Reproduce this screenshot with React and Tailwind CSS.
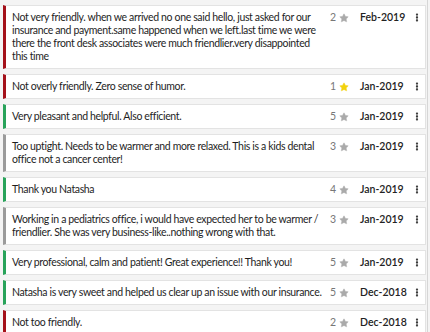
import { Star, EllipsisVertical } from 'lucide-react';

const reviews = [
  { text: 'Not very friendly. when we arrived no one said hello, just asked for our insurance and payment.same happened when we left.last time we were there the front desk associates were much friendlier.very disappointed this time', rating: 2, date: 'Feb-2019', tone: 'bad' },
  { text: 'Not overly friendly. Zero sense of humor.', rating: 1, date: 'Jan-2019', tone: 'bad' },
  { text: 'Very pleasant and helpful. Also efficient.', rating: 5, date: 'Jan-2019', tone: 'good' },
  { text: 'Too uptight. Needs to be warmer and more relaxed. This is a kids dental office not a cancer center!', rating: 3, date: 'Jan-2019', tone: 'meh' },
  { text: 'Thank you Natasha', rating: 4, date: 'Jan-2019', tone: 'good' },
  { text: 'Working in a pediatrics office, i would have expected her to be warmer / friendlier. She was very business-like..nothing wrong with that.', rating: 3, date: 'Jan-2019', tone: 'meh' },
  { text: 'Very professional, calm and patient! Great experience!! Thank you!', rating: 5, date: 'Jan-2019', tone: 'good' },
  { text: 'Natasha is very sweet and helped us clear up an issue with our insurance.', rating: 5, date: 'Dec-2018', tone: 'good' },
  { text: 'Not too friendly.', rating: 2, date: 'Dec-2018', tone: 'bad' },
];

const toneBorder = {
  bad: 'border-l-[#a4111a]',
  good: 'border-l-[#28a35a]',
  meh: 'border-l-[#9b9b9b]',
};

function ReviewRow({ review }) {
  return (
    <div className={`flex items-start bg-white border border-[#e3e3e3] border-l-[3px] ${toneBorder[review.tone]} py-[5px] pl-[6px] pr-[3px]`}>
      <p className="flex-1 text-[10.5px] leading-[13px] tracking-[-0.35px] text-[#1e1e1e] pr-[4px]">{review.text}</p>
      <div className="flex items-center w-[30px] shrink-0 text-[10.5px] leading-[13px] text-[#777]">
        <span>{review.rating}</span>
        <Star
          className={`ml-[3px] h-[10px] w-[10px] ${review.rating === 1 ? 'text-[#f2d20c] fill-[#f2d20c]' : 'text-[#aaa] fill-[#aaa]'}`}
          strokeWidth={1}
        />
      </div>
      <span className="w-[52px] shrink-0 whitespace-nowrap text-[10.5px] leading-[13px] font-semibold text-[#222]">{review.date}</span>
      <EllipsisVertical className="h-[13px] w-[10px] shrink-0 text-[#222]" strokeWidth={3.5} />
    </div>
  );
}

export default function App() {
  return (
    <div className="w-[430px] h-[332px] overflow-hidden bg-[#f4f4f4] font-['Lato',sans-serif]">
      <div className="w-[428px] border-r border-[#d6d6d6] pl-[3px] pr-[1px] pt-[5px] flex flex-col gap-[5px]">
        {reviews.map((r, i) => (
          <ReviewRow key={i} review={r} />
        ))}
      </div>
    </div>
  );
}
